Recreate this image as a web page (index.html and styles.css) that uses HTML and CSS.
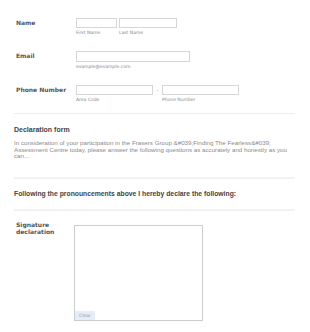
FILE: index.html
```html
<!DOCTYPE html>
<html>
<head>
<meta charset="UTF-8">
<title>Declaration form</title>
<link rel="stylesheet" href="styles.css">
</head>
<body>
	<div class="formBox">
		<ul class="fields">
			<li class="line">
				<label class="formLabel">Name</label>
				<div class="formEL">
					<span class="sub">
						<input class="first" type="text">
						<label>First Name</label>
					</span>
					<span class="sub">
						<input class="last" type="text">
						<label>Last Name</label>
					</span>
				</div>
			</li>
			<li class="line">
				<label class="formLabel">Email</label>
				<div class="formEL">
					<span class="sub">
						<input class="email" type="email">
						<label>example@example.com</label>
					</span>
				</div>
			</li>
			<li class="line">
				<label class="formLabel">Phone Number</label>
				<div class="formEL">
					<span class="sub">
						<input class="phone" type="tel">
						<label>Area Code</label>
					</span>
					<span class="dash">-</span>
					<span class="sub">
						<input class="phone" type="tel">
						<label>Phone Number</label>
					</span>
				</div>
			</li>
		</ul>

		<div class="section">
			<h3>Declaration form</h3>
			<p>In consideration of your participation in the Frasers Group &amp;#039;Finding The Fearless&amp;#039; Assessment Centre today, please answer the following questions as accurately and honestly as you can...</p>
		</div>

		<div class="section pronounce">
			<h3>Following the pronouncements above I hereby declare the following:</h3>
		</div>

		<div class="line sign">
			<label class="formLabel">Signature declaration</label>
			<div class="signPad">
				<button type="button">Clear</button>
			</div>
		</div>
	</div>
</body>
</html>
```

FILE: styles.css
```css
body {
	margin: 0;
	background-color: #fff;
	font-family: "DejaVu Sans", Verdana, sans-serif;
	color: #555;
}

.formBox {
	padding: 18px 15px 0 14px;
}

.fields {
	list-style: none;
	margin: 0 0 10px;
	padding: 0;
}

.line {
	display: flex;
	align-items: flex-start;
	margin-bottom: 15px;
}

.fields .line:last-child {
	margin-bottom: 0;
}

.formLabel {
	width: 60px;
	padding-left: 2px;
	font-size: 6px;
	font-weight: bold;
	line-height: 10px;
	color: #555;
}

.formEL {
	display: flex;
	align-items: flex-start;
}

.sub {
	display: flex;
	flex-direction: column;
	margin-right: 2px;
}

.sub input {
	box-sizing: border-box;
	height: 10px;
	margin: 0;
	padding: 0;
	border: 1px solid #d6d6d6;
	border-radius: 0;
	background: #fff;
}

.sub label {
	margin-top: 2px;
	font-size: 4.5px;
	line-height: 6px;
	color: #888;
}

input.first {
	width: 41px;
}

input.last {
	width: 58px;
}

input.email {
	width: 114px;
	height: 11px;
}

input.phone {
	width: 77px;
}

.dash {
	width: 5px;
	margin-right: 2px;
	font-size: 5px;
	line-height: 10px;
	text-align: center;
	color: #888;
}

.section {
	border-top: 1px solid #eee;
	padding: 11px 0 13px;
	font-family: "Liberation Sans", Arial, sans-serif;
}

.section h3 {
	margin: 0 0 6px;
	font-size: 7px;
	line-height: 9px;
	color: #444;
}

.section p {
	margin: 0;
	font-size: 6.2px;
	line-height: 6.7px;
	color: #8a8a8a;
}

.pronounce {
	border-top: 2px solid #f2f2f2;
	margin-top: 4px;
	padding: 10px 0 11px;
	border-bottom: 2px solid #f2f2f2;
}

.pronounce h3 {
	margin: 0;
	font-size: 6.8px;
}

.sign {
	margin-top: 14px;
}

.sign .formLabel {
	line-height: 7.3px;
	margin-top: -4px;
	padding-right: 4px;
	box-sizing: border-box;
}

.signPad {
	box-sizing: border-box;
	width: 129px;
	height: 96px;
	border: 1px solid #ccc;
	display: flex;
	align-items: flex-end;
}

.signPad button {
	height: 9px;
	width: 20px;
	padding: 0;
	border: none;
	background-color: #e6edf8;
	color: #999;
	font-family: "DejaVu Sans", Verdana, sans-serif;
	font-size: 4.5px;
	cursor: pointer;
}
```
